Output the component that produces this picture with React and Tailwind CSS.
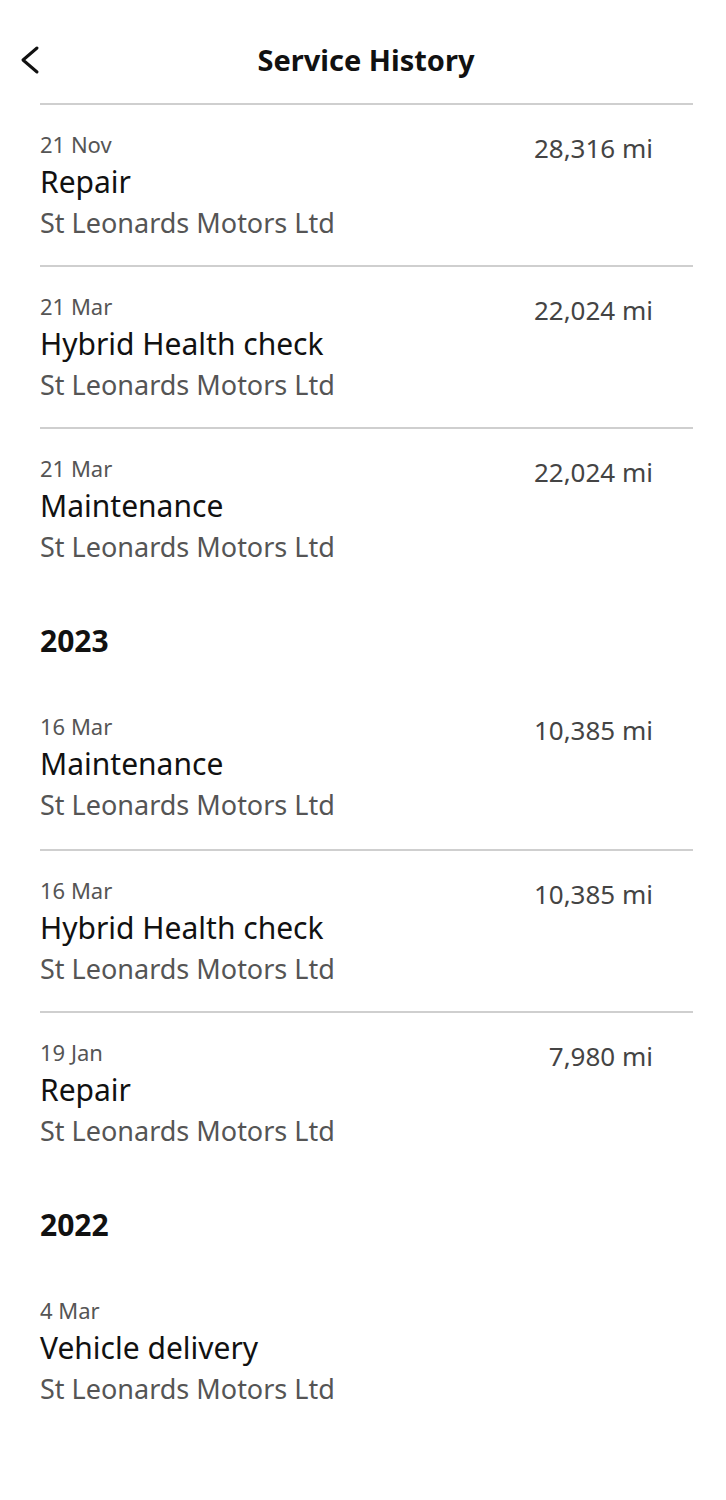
import { Fragment } from "react";

const groups = [
  {
    year: null,
    items: [
      { date: "21 Nov", title: "Repair", miles: "28,316 mi" },
      { date: "21 Mar", title: "Hybrid Health check", miles: "22,024 mi" },
      { date: "21 Mar", title: "Maintenance", miles: "22,024 mi" },
    ],
  },
  {
    year: "2023",
    items: [
      { date: "16 Mar", title: "Maintenance", miles: "10,385 mi" },
      { date: "16 Mar", title: "Hybrid Health check", miles: "10,385 mi" },
      { date: "19 Jan", title: "Repair", miles: "7,980 mi" },
    ],
  },
  {
    year: "2022",
    items: [{ date: "4 Mar", title: "Vehicle delivery", miles: null }],
  },
];

function ServiceRow({ date, title, miles, bordered }) {
  return (
    <div className={`flex justify-between ${bordered ? "border-t-2 border-[#cfcfcf] pt-[25px] pb-[22px]" : "pt-[28px] pb-[24px]"}`}>
      <div className="flex flex-col">
        <p className="text-[22px] leading-[28px] text-[#555]">{date}</p>
        <p className="mt-[4px] text-[30px] leading-[40px] text-[#111]">{title}</p>
        <p className="mt-[1px] text-[27px] leading-[40px] text-[#555]">St Leonards Motors Ltd</p>
      </div>
      {miles && (
        <p className="pr-10 pt-[2px] text-[26px] leading-[32px] text-[#444]">{miles}</p>
      )}
    </div>
  );
}

export default function App() {
  return (
    <div className="min-h-[1500px] bg-white font-['Noto_Sans',sans-serif]">
      <header className="relative flex h-[103px] items-center justify-center pb-[2px]">
        <button className="absolute left-[19px] top-[45px] p-0">
          <svg width="22" height="30" viewBox="0 0 22 30" fill="none">
            <polyline points="18,3 4,15 18,27" stroke="#111" strokeWidth="3" strokeLinecap="round" strokeLinejoin="round" />
          </svg>
        </button>
        <h1 className="ml-[6px] mt-[18px] text-[29px] font-bold text-[#111]">Service History</h1>
      </header>
      <main className="pl-10 pr-[33px]">
        {groups.map((g, gi) => (
          <Fragment key={gi}>
            {g.year && (
              <h2 className="pt-[32px] pb-[23px] text-[30px] font-bold leading-[40px] text-[#111]">{g.year}</h2>
            )}
            {g.items.map((it, i) => (
              <ServiceRow key={i} {...it} bordered={!g.year || i > 0} />
            ))}
          </Fragment>
        ))}
      </main>
    </div>
  );
}
